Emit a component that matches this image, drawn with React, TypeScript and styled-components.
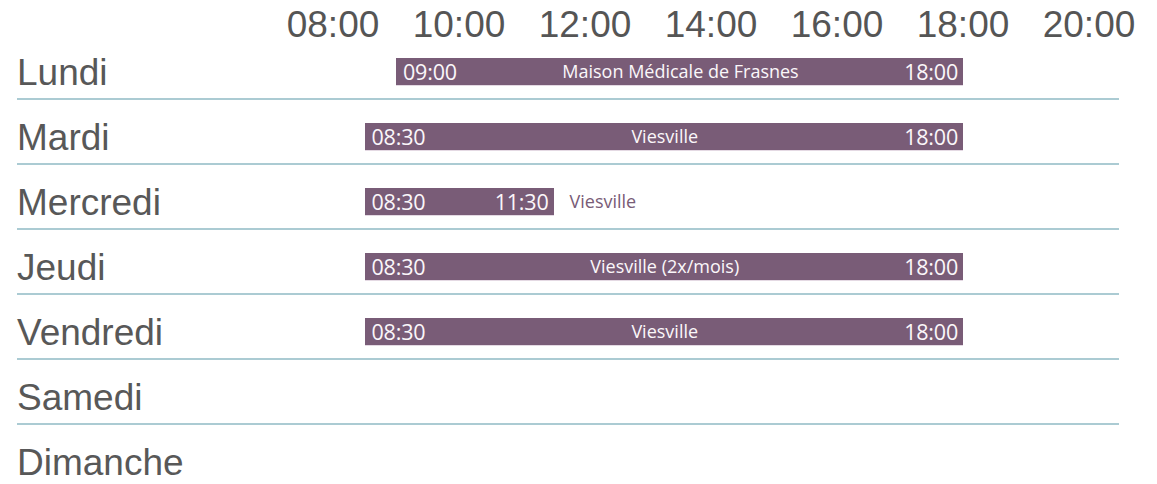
import styled, { createGlobalStyle } from "styled-components";

const HOUR = 63;
const START = 8;

const days: { name: string; slot?: { from: number; to: number; fromLabel: string; toLabel: string; place: string; outside?: boolean } }[] = [
    { name: "Lundi", slot: { from: 9, to: 18, fromLabel: "09:00", toLabel: "18:00", place: "Maison Médicale de Frasnes" } },
    { name: "Mardi", slot: { from: 8.5, to: 18, fromLabel: "08:30", toLabel: "18:00", place: "Viesville" } },
    { name: "Mercredi", slot: { from: 8.5, to: 11.5, fromLabel: "08:30", toLabel: "11:30", place: "Viesville", outside: true } },
    { name: "Jeudi", slot: { from: 8.5, to: 18, fromLabel: "08:30", toLabel: "18:00", place: "Viesville (2x/mois)" } },
    { name: "Vendredi", slot: { from: 8.5, to: 18, fromLabel: "08:30", toLabel: "18:00", place: "Viesville" } },
    { name: "Samedi" },
    { name: "Dimanche" },
];

const ticks = ["08:00", "10:00", "12:00", "14:00", "16:00", "18:00", "20:00"];

const Global = createGlobalStyle`
    body {
        margin: 0;
        background: #fff;
        font-family: "Liberation Sans", Arial, sans-serif;
    }
`;

const Page = styled.div`
    padding-top: 8px;
    width: 1157px;
`;

const Header = styled.div`
    display: grid;
    grid-template-columns: repeat(7, 126px);
    padding-left: 270px;
    height: 27px;
`;

const Tick = styled.span`
    text-align: center;
    font-size: 37px;
    line-height: 34px;
    color: #555;
`;

const Row = styled.div<{ $last?: boolean }>`
    display: grid;
    grid-template-columns: 316px 1fr;
    align-items: end;
    margin-left: 17px;
    width: 1102px;
    height: 63px;
    border-bottom: 2px solid ${p => p.$last ? "transparent" : "#abcbd3"};
`;

const Day = styled.span`
    font-size: 37px;
    line-height: 37px;
    padding-bottom: 7px;
    color: #585858;
`;

const Track = styled.div`
    display: flex;
    align-items: center;
    padding-bottom: 13px;
    font-family: "Open Sans", "Noto Sans", sans-serif;
`;

const Bar = styled.div`
    display: grid;
    grid-template-columns: 1fr auto 1fr;
    align-items: center;
    height: 27px;
    padding: 0 5px 0 7px;
    box-sizing: border-box;
    background: #795c77;
    color: #fbf7fa;
    box-shadow: 0 1px 0 #e4d9e3;
`;

const Time = styled.span<{ $end?: boolean }>`
    justify-self: ${p => p.$end ? "end" : "start"};
    font-size: 21.5px;
    line-height: 27px;
    letter-spacing: -0.2px;
`;

const Place = styled.span<{ $outside?: boolean }>`
    font-size: 18px;
    line-height: 27px;
    white-space: nowrap;
    color: ${p => p.$outside ? "#795c77" : "inherit"};
    margin-left: ${p => p.$outside ? "16px" : "0"};
`;

export default function App() {
    return (
        <>
            <Global />
            <Page>
                <Header>
                    {ticks.map(t => <Tick key={t}>{t}</Tick>)}
                </Header>
                {days.map((d, i) => (
                    <Row key={d.name} $last={i === days.length - 1}>
                        <Day>{d.name}</Day>
                        <Track>
                            {d.slot && (
                                <>
                                    <Bar style={{ marginLeft: (d.slot.from - START) * HOUR, width: (d.slot.to - d.slot.from) * HOUR }}>
                                        <Time>{d.slot.fromLabel}</Time>
                                        {d.slot.outside ? <span /> : <Place>{d.slot.place}</Place>}
                                        <Time $end>{d.slot.toLabel}</Time>
                                    </Bar>
                                    {d.slot.outside && <Place $outside>{d.slot.place}</Place>}
                                </>
                            )}
                        </Track>
                    </Row>
                ))}
            </Page>
        </>
    );
}
